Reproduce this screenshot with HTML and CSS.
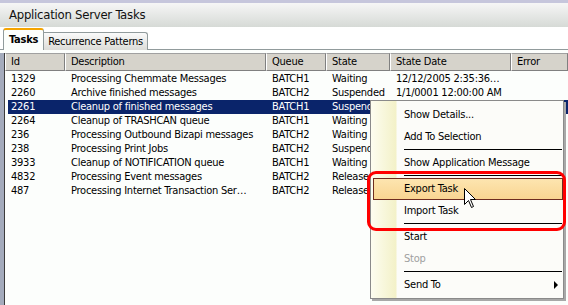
FILE: index.html
```html
<!DOCTYPE html>
<html lang="en">
  <head>
    <meta charset="UTF-8" />
    <title>Application Server Tasks</title>
    <link rel="stylesheet" href="styles.css">
  </head>
  <body>
    <div class="window">
      <div class="titlebar">Application Server Tasks</div>
      <div class="tabstrip">
        <div class="tab active">Tasks</div>
        <div class="tab">Recurrence Patterns</div>
      </div>
      <div class="gridwrap">
        <div class="grid">
          <div class="row head">
            <div class="c">Id</div>
            <div class="c">Description</div>
            <div class="c">Queue</div>
            <div class="c">State</div>
            <div class="c">State Date</div>
            <div class="c">Error</div>
          </div>
          <div class="row">
            <div class="c">1329</div>
            <div class="c">Processing Chemmate Messages</div>
            <div class="c">BATCH1</div>
            <div class="c">Waiting</div>
            <div class="c">12/12/2005 2:35:36…</div>
            <div class="c"></div>
          </div>
          <div class="row">
            <div class="c">2260</div>
            <div class="c">Archive finished messages</div>
            <div class="c">BATCH2</div>
            <div class="c">Suspended</div>
            <div class="c">1/1/0001 12:00:00 AM</div>
            <div class="c"></div>
          </div>
          <div class="row sel">
            <div class="c">2261</div>
            <div class="c">Cleanup of finished messages</div>
            <div class="c">BATCH1</div>
            <div class="c">Suspended</div>
            <div class="c"></div>
            <div class="c"></div>
          </div>
          <div class="row">
            <div class="c">2264</div>
            <div class="c">Cleanup of TRASHCAN queue</div>
            <div class="c">BATCH1</div>
            <div class="c">Waiting</div>
            <div class="c"></div>
            <div class="c"></div>
          </div>
          <div class="row">
            <div class="c">236</div>
            <div class="c">Processing Outbound Bizapi messages</div>
            <div class="c">BATCH2</div>
            <div class="c">Waiting</div>
            <div class="c"></div>
            <div class="c"></div>
          </div>
          <div class="row">
            <div class="c">238</div>
            <div class="c">Processing Print Jobs</div>
            <div class="c">BATCH2</div>
            <div class="c">Suspended</div>
            <div class="c"></div>
            <div class="c"></div>
          </div>
          <div class="row">
            <div class="c">3933</div>
            <div class="c">Cleanup of NOTIFICATION queue</div>
            <div class="c">BATCH1</div>
            <div class="c">Waiting</div>
            <div class="c"></div>
            <div class="c"></div>
          </div>
          <div class="row">
            <div class="c">4832</div>
            <div class="c">Processing Event messages</div>
            <div class="c">BATCH2</div>
            <div class="c">Released</div>
            <div class="c"></div>
            <div class="c"></div>
          </div>
          <div class="row">
            <div class="c">487</div>
            <div class="c">Processing Internet Transaction Ser…</div>
            <div class="c">BATCH2</div>
            <div class="c">Released</div>
            <div class="c"></div>
            <div class="c"></div>
          </div>
        </div>
      </div>
    </div>

    <!-- context menu over the grid -->
    <div class="menu">
      <div class="item">Show Details...</div>
      <div class="item">Add To Selection</div>
      <div class="sep"></div>
      <div class="item">Show Application Message</div>
      <div class="sep"></div>
      <div class="item hot">Export Task</div>
      <div class="item">Import Task</div>
      <div class="sep"></div>
      <div class="item">Start</div>
      <div class="item off">Stop</div>
      <div class="sep"></div>
      <div class="item sub">Send To</div>
    </div>
    <div class="callout"></div>
    <svg class="cursor" width="13" height="21" viewBox="0 0 13 21">
      <path d="M0.5 0.5 L0.5 16.5 L4.5 12.5 L7.5 19.5 L9.5 18.5 L6.5 11.5 L11.5 11.5 Z" fill="#fff" stroke="#000" stroke-width="1" />
    </svg>
  </body>
</html>
```

FILE: styles.css
```css
* {
  margin: 0;
  padding: 0;
  box-sizing: border-box;
}

body {
  width: 568px;
  height: 305px;
  overflow: hidden;
  position: relative;
  font-family: "DejaVu Sans Condensed", "DejaVu Sans", sans-serif;
  font-stretch: condensed;
  font-size: 11px;
  letter-spacing: -0.25px;
  color: #000;
  background-color: #fcfefc;
}

.window {
  display: flex;
  flex-direction: column;
  height: 305px;
}

.titlebar {
  height: 27px;
  border-top: 3px solid #c6c6dc;
  background: linear-gradient(to bottom, #f6f6f6, #d6dad6);
  font-size: 13px;
  line-height: 24px;
  padding-left: 9px;
  color: #111;
}

.tabstrip {
  height: 23px;
  display: flex;
  align-items: flex-end;
  padding-left: 3px;
  background-color: #fff;
  border-bottom: 1px solid #919b9c;
}

.tab {
  height: 18px;
  margin-bottom: -1px;
  padding: 0 4px 0 4px;
  line-height: 17px;
  border: 1px solid #919b9c;
  border-bottom: none;
  border-left: none;
  border-radius: 0 3px 0 0;
  background: linear-gradient(to bottom, #fafafa, #dcdcd8);
}

.tab.active {
  height: 22px;
  padding: 0 5px 0 5px;
  line-height: 20px;
  font-weight: bold;
  background: #fcfefc;
  border-left: 1px solid #919b9c;
  border-top: 2px solid #f5a400;
  border-radius: 3px 3px 0 0;
}

.gridwrap {
  flex: 1;
  margin-top: 3px;
  border-left: 4px solid #a4abbc;
}

.grid {
  height: 100%;
  border-left: 1px solid #3c3c3c;
}

.row {
  display: grid;
  grid-template-columns: 60px 201px 60px 64px 121px 1fr;
  height: 14px;
  line-height: 14px;
  white-space: nowrap;
}

.row .c {
  padding-left: 6px;
  overflow: hidden;
}

.row.head {
  height: 18px;
  line-height: 16px;
  margin-bottom: 1px;
}

.row.head .c {
  padding-left: 5px;
  background-color: #d6d3cb;
  border-top: 1px solid #a0a0a0;
  border-left: 1px solid #fff;
  border-right: 1px solid #808080;
  border-bottom: 1px solid #808080;
}

.row.sel {
  color: #fff;
  background: linear-gradient(to right, transparent 3px, #0a246a 3px);
}

.menu {
  position: absolute;
  left: 370px;
  top: 100px;
  width: 194px;
  height: 199px;
  padding: 3px 0 2px;
  border: 1px solid #8a8a8a;
  box-shadow: 2px 2px 0 #a8a8a8;
  background: linear-gradient(to right, #fdfdf0, #f3f1c8 25px, #fcfcf9 26px);
}

.item {
  height: 22px;
  line-height: 22px;
  padding-left: 33px;
  position: relative;
}

.item.hot {
  margin: 0 0 0 2px;
  padding-left: 30px;
  line-height: 20px;
  border: 1px solid #6e2c20;
  background: linear-gradient(to bottom, #fde5b0, #f9d592);
}

.item.off {
  color: #a0a0a0;
}

.item.sub::after {
  content: "";
  position: absolute;
  right: 5px;
  top: 7px;
  border-left: 4px solid #000;
  border-top: 4px solid transparent;
  border-bottom: 4px solid transparent;
}

.sep {
  height: 4px;
  margin: 0 1px 0 33px;
  border-top: 1px solid #000;
  transform: translateY(1px);
}

.callout {
  position: absolute;
  left: 367px;
  top: 171px;
  width: 199px;
  height: 60px;
  border: 3px solid #f00;
  border-radius: 9px;
}

.cursor {
  position: absolute;
  left: 464px;
  top: 188px;
}
```
